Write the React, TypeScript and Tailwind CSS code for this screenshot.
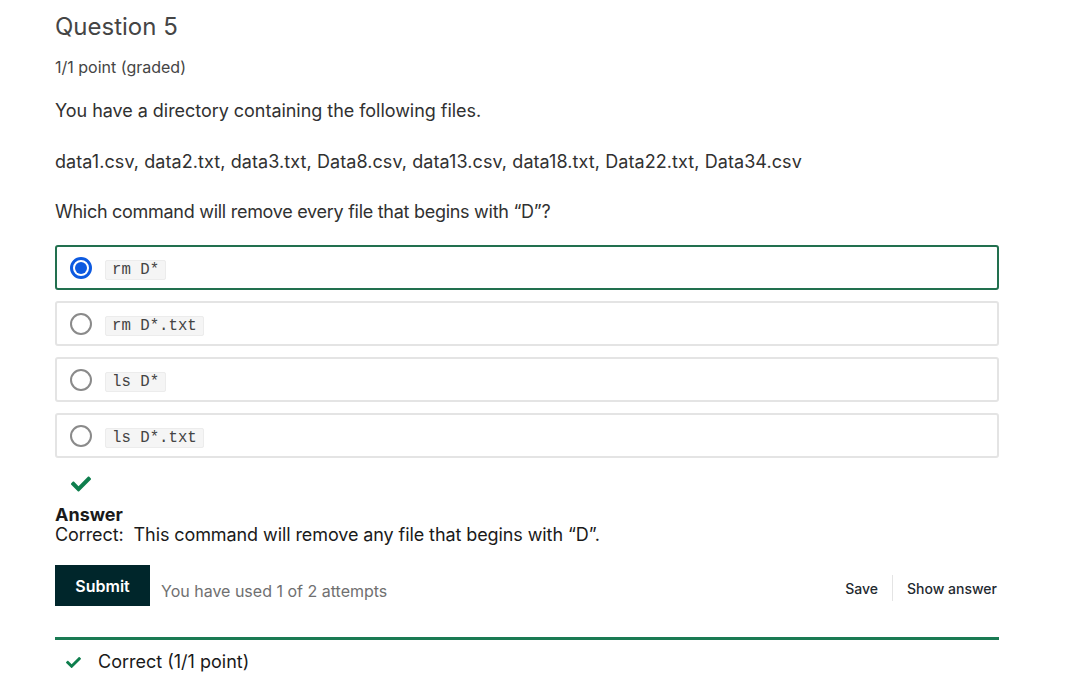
import React from "react";

const Check = ({ className }: { className?: string }) => (
  <svg viewBox="0 0 512 512" className={className} fill="currentColor">
    <path d="M173.898 439.404l-166.4-166.4c-9.997-9.997-9.997-26.206 0-36.204l36.203-36.204c9.997-9.998 26.207-9.998 36.204 0L192 312.69 432.095 72.596c9.997-9.997 26.207-9.997 36.204 0l36.203 36.204c9.997 9.997 9.997 26.206 0 36.204l-294.4 294.401c-9.998 9.997-26.207 9.997-36.204-.001z" />
  </svg>
);

const options = ["rm D*", "rm D*.txt", "ls D*", "ls D*.txt"];

export default function App() {
  return (
    <div className="min-h-screen bg-white" style={{ fontFamily: "Inter, 'Noto Sans', sans-serif" }}>
      <div className="ml-[55px] w-[944px] pt-[11px]">
        <h2 className="text-[24px] leading-[32px] text-[#454545] font-normal">Question 5</h2>
        <div className="mt-[12px] text-[16px] leading-[24px] text-[#454545]">1/1 point (graded)</div>
        <p className="mt-[19px] text-[18px] leading-[26px] text-[#313131] tracking-[-0.04px]">You have a directory containing the following files.</p>
        <p className="mt-[25px] text-[18px] leading-[26px] text-[#313131] tracking-[0.08px]">data1.csv, data2.txt, data3.txt, Data8.csv, data13.csv, data18.txt, Data22.txt, Data34.csv</p>
        <p className="mt-[24px] text-[18px] leading-[26px] text-[#313131] tracking-[-0.28px]">Which command will remove every file that begins with “D”?</p>
        <div className="mt-[20px] flex flex-col gap-[11px]">
          {options.map((o, i) => (
            <div
              key={o}
              className={
                i === 0
                  ? "h-[45px] flex items-center rounded-[3px] border-2 border-[#22704f] pl-[13px]"
                  : "h-[45px] flex items-center rounded-[3px] border-2 border-[#e4e4e4] pl-[13px]"
              }
            >
              {i === 0 ? (
                <span className="w-[22px] h-[22px] rounded-full border-[3px] border-[#0d5ae0] flex items-center justify-center">
                  <span className="w-[12px] h-[12px] rounded-full bg-[#0d5ae0]" />
                </span>
              ) : (
                <span className="w-[22px] h-[22px] rounded-full border-2 border-[#8a8a8a]" />
              )}
              <code
                className="ml-[13px] mt-[5px] px-[6px] bg-[#f5f5f5] border border-[#ececec] rounded-[2px] text-[15.7px] leading-[18px] text-[#444]"
                style={{ fontFamily: "'Liberation Mono', monospace" }}
              >
                {o}
              </code>
            </div>
          ))}
        </div>
        <Check className="mt-[16px] ml-[16px] w-[20px] h-[20px] text-[#0e7e4d]" />
        <div className="mt-[11px] text-[18px] leading-[20px] font-bold text-[#1a1a1a]">Answer</div>
        <div className="text-[18px] leading-[20px] text-[#1a1a1a] tracking-[-0.09px]">Correct:&nbsp; This command will remove any file that begins with “D”.</div>
        <div className="mt-[20px] flex items-center">
          <button className="w-[95px] h-[41px] bg-[#00262b] text-white text-[16px] font-semibold">Submit</button>
          <span className="ml-[11px] mt-[11px] text-[16px] text-[#707070]">You have used 1 of 2 attempts</span>
          <div className="ml-auto mt-[5px] flex items-center text-[14px] font-medium text-[#1f2a30]">
            <span className="pr-[14px]">Save</span>
            <span className="w-px h-[26px] bg-[#e4e4e4]" />
            <span className="pl-[14px] pr-[2px]">Show answer</span>
          </div>
        </div>
        <div className="mt-[31px] h-[3px] bg-[#1a7a53]" />
        <div className="mt-[10px] flex items-center">
          <Check className="ml-[11px] w-[15px] h-[15px] text-[#0e7e4d]" />
          <span className="ml-[17px] text-[18px] leading-[24px] text-[#1a1a1a]">Correct (1/1 point)</span>
        </div>
      </div>
    </div>
  );
}
